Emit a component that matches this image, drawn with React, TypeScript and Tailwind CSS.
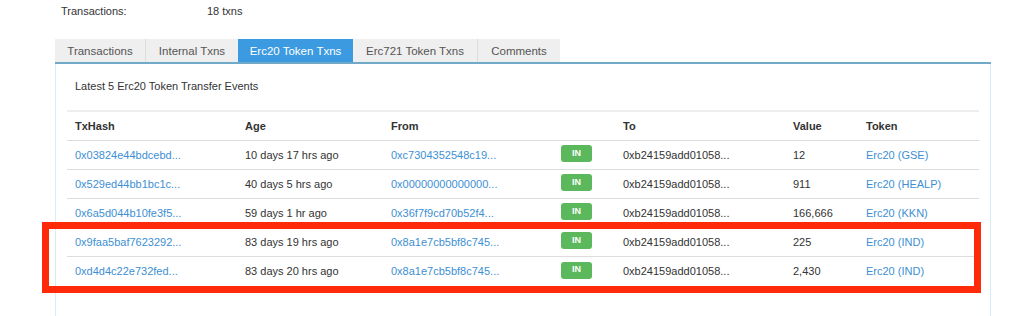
import React from "react";

const rows = [
  { hash: "0x03824e44bdcebd...", age: "10 days 17 hrs ago", from: "0xc7304352548c19...", to: "0xb24159add01058...", value: "12", token: "Erc20 (GSE)" },
  { hash: "0x529ed44bb1bc1c...", age: "40 days 5 hrs ago", from: "0x00000000000000...", to: "0xb24159add01058...", value: "911", token: "Erc20 (HEALP)" },
  { hash: "0x6a5d044b10fe3f5...", age: "59 days 1 hr ago", from: "0x36f7f9cd70b52f4...", to: "0xb24159add01058...", value: "166,666", token: "Erc20 (KKN)" },
  { hash: "0x9faa5baf7623292...", age: "83 days 19 hrs ago", from: "0x8a1e7cb5bf8c745...", to: "0xb24159add01058...", value: "225", token: "Erc20 (IND)" },
  { hash: "0xd4d4c22e732fed...", age: "83 days 20 hrs ago", from: "0x8a1e7cb5bf8c745...", to: "0xb24159add01058...", value: "2,430", token: "Erc20 (IND)" },
];

const cols = "grid grid-cols-[170px_146px_170px_62px_170px_73px_119px]";

export default function App() {
  return (
    <div
      className="relative w-[1024px] h-[316px] overflow-hidden bg-white text-[11px] text-[#333]"
      style={{ fontFamily: '"Liberation Sans", Arial, sans-serif' }}
    >
      <div className="flex h-[23px] items-center pl-[61px]">
        <span className="w-[146px]">Transactions:</span>
        <span>18 txns</span>
      </div>

      <div className="ml-[55px] mt-[16px] w-[936px]">
        <div className="flex h-[25px] items-stretch border-b-2 border-[#71a9c9] text-[11.5px]">
          <div className="flex w-[91px] items-center justify-center pt-[2px] bg-[#efefef] text-[#555] border-r border-[#ddd]">Transactions</div>
          <div className="flex w-[92px] items-center justify-center pt-[2px] bg-[#efefef] text-[#555]">Internal Txns</div>
          <div className="flex w-[115px] items-center justify-center pt-[2px] bg-[#3c9ae0] text-white">Erc20 Token Txns</div>
          <div className="flex w-[125px] items-center justify-center pt-[2px] bg-[#efefef] text-[#555] border-r border-[#ddd]">Erc721 Token Txns</div>
          <div className="flex w-[82px] items-center justify-center pt-[2px] bg-[#efefef] text-[#555]">Comments</div>
        </div>
        <div className="h-[260px] border-x border-[#d6eef6] px-[11px]">
          <div className="pl-[8px] pt-[14px] h-[46px]">Latest 5 Erc20 Token Transfer Events</div>
          <div className="border-t-2 border-[#eee]">
            <div className={`${cols} h-[29px] items-center border-b border-[#ddd] font-bold pt-[1px]`}>
              <div className="pl-[8px]">TxHash</div>
              <div className="pl-[8px]">Age</div>
              <div className="pl-[8px]">From</div>
              <div></div>
              <div className="pl-[8px]">To</div>
              <div className="pl-[8px]">Value</div>
              <div className="pl-[8px]">Token</div>
            </div>
            {rows.map((r, i) => (
              <div key={i} className={`${cols} h-[29px] items-center ${i < rows.length - 1 ? "border-b border-[#ddd]" : ""}`}>
                <div className="pl-[8px] text-[#3d8fd4]">{r.hash}</div>
                <div className="pl-[8px]">{r.age}</div>
                <div className="pl-[8px] text-[#3d8fd4]">{r.from}</div>
                <div className="pl-[8px] pb-[4px]">
                  <span className="inline-flex h-[17px] w-[31px] items-center justify-center rounded-[3px] bg-[#5cb85c] text-[9px] font-bold text-white">IN</span>
                </div>
                <div className="pl-[8px]">{r.to}</div>
                <div className="pl-[8px]">{r.value}</div>
                <div className="pl-[8px] text-[#3d8fd4]">{r.token}</div>
              </div>
            ))}
          </div>
        </div>
      </div>

      <div className="absolute left-[42px] top-[222px] h-[71px] w-[939px] border-[7px] border-[#fe2a09]"></div>
    </div>
  );
}
